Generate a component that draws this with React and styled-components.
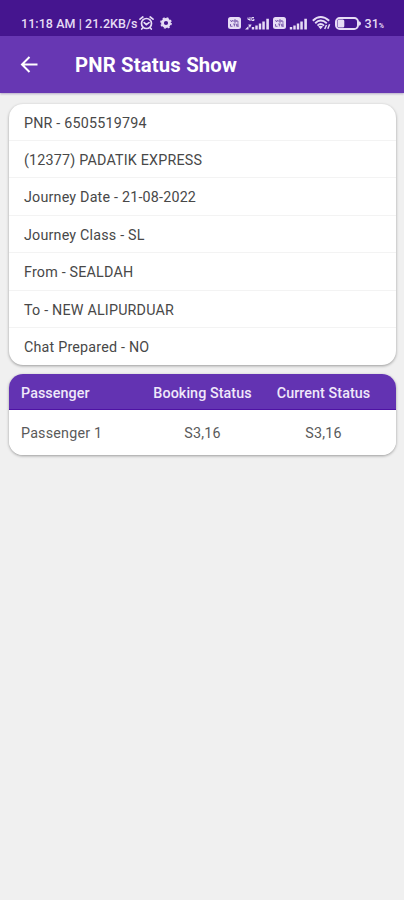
import React from "react";
import styled, { createGlobalStyle } from "styled-components";

const GlobalStyle = createGlobalStyle`
  * { box-sizing: border-box; }
  body { margin: 0; background: #f0f0f0; font-family: Roboto, "Liberation Sans", sans-serif; }
`;

const Screen = styled.div`
  height: 900px;
  overflow: hidden;
  background: #f0f0f0;
`;

const StatusBar = styled.div`
  height: 36px;
  padding: 10px 20px 0 21px;
  display: flex;
  justify-content: space-between;
  background: #45158f;
  color: #e6dcf5;
`;

const StatusGroup = styled.div`
  height: 26px;
  display: flex;
  align-items: center;
  gap: ${(p) => p.$gap}px;
`;

const StatusText = styled.span`
  font-size: 12.5px;
  font-weight: 500;
  white-space: pre;
  letter-spacing: ${(p) => p.$spacing || 0}px;
`;

const Percent = styled.span`
  font-size: 7px;
  font-weight: 700;
`;

const Glyph = styled.svg`
  display: block;
  flex: none;
`;

const AppBar = styled.header`
  height: 57px;
  padding-left: 19px;
  display: flex;
  align-items: center;
  gap: 35px;
  background: #6737b3;
  color: #fff;
  box-shadow: 0 1px 2px rgba(70, 40, 120, 0.35);
`;

const BackButton = styled.button`
  width: 21px;
  height: 20px;
  padding: 0;
  border: 0;
  background: none;
  color: inherit;
`;

const Title = styled.h1`
  margin: 0;
  font-size: 20.3px;
  line-height: 26px;
  font-weight: 700;
  letter-spacing: 0.17px;
`;

const Content = styled.main`
  padding: 11px 8px 0 9px;
  display: flex;
  flex-direction: column;
  gap: 9px;
`;

const Card = styled.section`
  height: ${(p) => p.$height}px;
  border-radius: 14px;
  overflow: hidden;
  background: #fff;
  box-shadow: 0 1px 3px rgba(0, 0, 0, 0.36);
`;

const DetailRow = styled.div`
  height: 37.5px;
  padding: 1.5px 0 0 15px;
  display: flex;
  align-items: center;
  font-size: 14.3px;
  letter-spacing: 0.2px;
  color: #484848;
  border-bottom: 1.5px solid #f3f3f3;

  &:first-child { height: 36.5px; }
  &:last-child { border-bottom: 0; height: 36.5px; }
`;

const TableRow = styled.div`
  height: ${(p) => (p.$head ? 36 : 45)}px;
  padding: ${(p) => (p.$head ? 2 : 0)}px 0 0 12px;
  display: grid;
  grid-template-columns: 121px 121px 121px;
  align-items: center;
  font-size: 14.3px;
  letter-spacing: ${(p) => (p.$head ? 0.08 : 0.2)}px;
  font-weight: ${(p) => (p.$head ? 500 : 400)};
  color: ${(p) => (p.$head ? "#f0e8fa" : "#5a5a5a")};
  background: ${(p) => (p.$head ? "#6333b2" : "#fff")};
  border-bottom: ${(p) => (p.$head ? "1px solid #4f12a4" : "0")};
`;

const Cell = styled.span`
  text-align: ${(p) => (p.$center ? "center" : "left")};
  white-space: nowrap;
`;

const details = [
  "PNR - 6505519794",
  "(12377) PADATIK EXPRESS",
  "Journey Date - 21-08-2022",
  "Journey Class - SL",
  "From - SEALDAH",
  "To - NEW ALIPURDUAR",
  "Chat Prepared - NO",
];

const Alarm = () => (
  <Glyph width="15" height="14" viewBox="0 0 15 14" fill="none" stroke="currentColor" strokeWidth="1.7" strokeLinecap="round">
    <circle cx="7.5" cy="7.5" r="5" />
    <path d="M1 3.2 3.8 1M14 3.2 11.2 1M5.2 6.6 7.3 8.6 10 6.6M3.6 12 2.7 13M11.4 12l.9 1" />
  </Glyph>
);

const Gear = () => (
  <Glyph width="12" height="12" viewBox="0 0 12 12" fill="none" stroke="currentColor">
    <circle cx="6" cy="6" r="3.5" strokeWidth="2.8" />
    <circle cx="6" cy="6" r="5.1" strokeWidth="1.5" strokeDasharray="2 2.005" />
  </Glyph>
);

const Volte = () => (
  <Glyph width="13" height="12" viewBox="0 0 13 12">
    <rect width="13" height="12" rx="2.5" fill="currentColor" />
    <path d="M2.5 3 3.6 5 4.7 3M6 3h2v2H6zM9 3v2h1.8M2.5 7v2.3h2M5.2 7h2.4M6.4 7v2.4M10.8 7H8.7v2.3h2.1M8.7 8.2h2" fill="none" stroke="#65419f" strokeWidth=".8" />
  </Glyph>
);

const Signal = ({ data }) => (
  <Glyph width={data ? 25 : 19} height="13" viewBox={data ? "0 0 25 13" : "6 0 19 13"} fill="currentColor">
    {data && (
      <g>
        <path d="M3 .5v2h2M5 0v4M9 .5H6.8v3H9V2.2H8" fill="none" stroke="currentColor" strokeWidth="1" />
        <path d="M0 12.5h3.5V9zM3.2 7.5h3.4L4.9 11z" />
      </g>
    )}
    <path d="M6.8 10h2.4v2.5H6.8zM10.3 8.5h2.4v4h-2.4zM13.8 6.5h2.4v6h-2.4zM17.3 4.5h2.5v8h-2.5zM21.3 1.8h2.6v10.7h-2.6z" />
  </Glyph>
);

const Wifi = () => (
  <Glyph width="19" height="14" viewBox="0 0 19 14" fill="none" stroke="currentColor" strokeWidth="1.9">
    <path d="M.8 4.7Q8.5-2.5 17.2 4.7M3.2 7.2Q8.5 2 14.8 7.2M5.5 9.6Q8.5 6.5 12 9.6" />
    <path d="M6.2 10.6Q8.7 8.8 11 10.6L8.6 13.3Z" fill="currentColor" stroke="none" />
    <path d="m12.7 13 1.8-4M15.8 12.7l1.8-4.5" strokeWidth="1.5" />
  </Glyph>
);

const Battery = () => (
  <Glyph width="26" height="13" viewBox="0 0 26 13">
    <rect x="1" y="1" width="22" height="11" rx="3.8" fill="none" stroke="currentColor" strokeWidth="2" />
    <rect x="2.5" y="2.5" width="6.8" height="8" rx="1.5" fill="currentColor" />
    <path d="M24 4.2q2 .5 2 2.3t-2 2.3z" fill="currentColor" />
  </Glyph>
);

const BackArrow = () => (
  <Glyph width="21" height="20" viewBox="0 0 21 20" fill="none" stroke="currentColor" strokeWidth="2">
    <path d="M18.5 9.5H3.5M10.5 2 3 9.5l7.5 7.5" />
  </Glyph>
);

export default function App() {
  return (
    <Screen>
      <GlobalStyle />
      <StatusBar>
        <StatusGroup $gap={6}>
          <StatusGroup $gap={2}>
            <StatusText $spacing={0.06}>11:18 AM | 21.2KB/s</StatusText>
            <Alarm />
          </StatusGroup>
          <Gear />
        </StatusGroup>
        <StatusGroup $gap={4}>
          <Volte />
          <StatusGroup $gap={3}>
            <Signal data />
            <Volte />
            <Signal />
          </StatusGroup>
          <Wifi />
          <Battery />
          <StatusText>31<Percent>%</Percent></StatusText>
        </StatusGroup>
      </StatusBar>
      <AppBar>
        <BackButton aria-label="Back"><BackArrow /></BackButton>
        <Title>PNR Status Show</Title>
      </AppBar>
      <Content>
        <Card $height={261}>
          {details.map((text) => <DetailRow key={text}>{text}</DetailRow>)}
        </Card>
        <Card $height={81}>
          <TableRow $head>
            <Cell>Passenger</Cell>
            <Cell $center>Booking Status</Cell>
            <Cell $center>Current Status</Cell>
          </TableRow>
          <TableRow>
            <Cell>Passenger 1</Cell>
            <Cell $center>S3,16</Cell>
            <Cell $center>S3,16</Cell>
          </TableRow>
        </Card>
      </Content>
    </Screen>
  );
}
